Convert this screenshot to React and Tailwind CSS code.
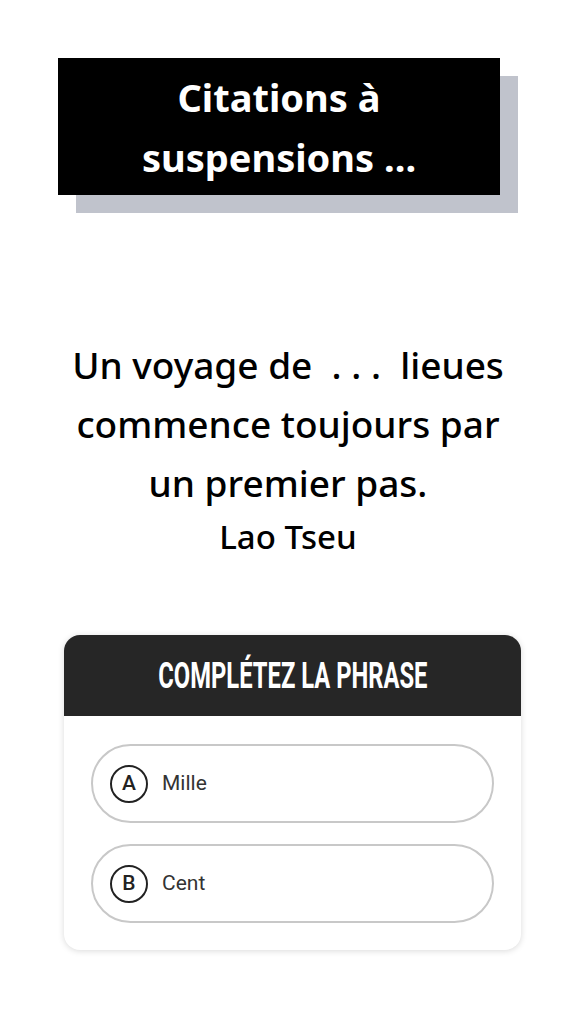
const options = [
  { letter: 'A', label: 'Mille' },
  { letter: 'B', label: 'Cent' },
]

const App = () => {
  return (
    <div className="min-h-[1024px] w-[576px] bg-white" style={{ fontFamily: '"Open Sans", "Noto Sans", sans-serif' }}>
      {/* Title */}
      <div className="pt-[58px] pl-[58px]">
        <div className="relative w-[442px] h-[137px]">
          <div className="absolute left-[18px] top-[18px] w-[442px] h-[137px] bg-[#c0c3cc]" />
          <div className="relative flex h-full flex-col items-center justify-center bg-black text-white font-bold text-[38px] leading-[60px]" style={{ fontFamily: '"Noto Sans", "Open Sans", sans-serif' }}>
            <span>Citations à</span>
            <span>suspensions ...</span>
          </div>
        </div>
      </div>

      {/* Quote */}
      <div className="mt-[140px] flex flex-col items-center text-black" style={{ fontFamily: '"Noto Sans", sans-serif' }}>
        <p className="text-[37px] leading-[59px] text-center font-medium">
          Un voyage de&nbsp; . . .&nbsp; lieues
          <br />
          commence toujours par
          <br />
          un premier pas.
        </p>
        <p className="text-[33px] leading-[50px] font-medium">Lao Tseu</p>
      </div>

      {/* Card */}
      <div className="mt-[73px] mx-[64px] w-[457px] overflow-hidden rounded-[16px] bg-white shadow-[0_1px_6px_rgba(0,0,0,0.15)]">
        <div className="flex h-[81px] items-center justify-center bg-[#262626]">
          <span className="inline-block text-white text-[36px] font-bold uppercase scale-x-[0.66] whitespace-nowrap" style={{ fontFamily: '"Liberation Sans Narrow", "Roboto", sans-serif' }}>
            Complétez la phrase
          </span>
        </div>
        <div className="flex flex-col gap-[21px] px-[27px] pt-[28px] pb-[27px]">
          {options.map((o) => (
            <div key={o.letter} className="flex h-[79px] items-center gap-[14px] rounded-full border-2 border-[#c8c8c8] pl-[17px]" style={{ fontFamily: 'Roboto, sans-serif' }}>
              <span className="flex h-[38px] w-[38px] items-center justify-center rounded-full border-2 border-[#222] text-[21px] font-medium text-[#222]">
                {o.letter}
              </span>
              <span className="text-[21px] text-[#333]">{o.label}</span>
            </div>
          ))}
        </div>
      </div>
    </div>
  )
}

export default App
